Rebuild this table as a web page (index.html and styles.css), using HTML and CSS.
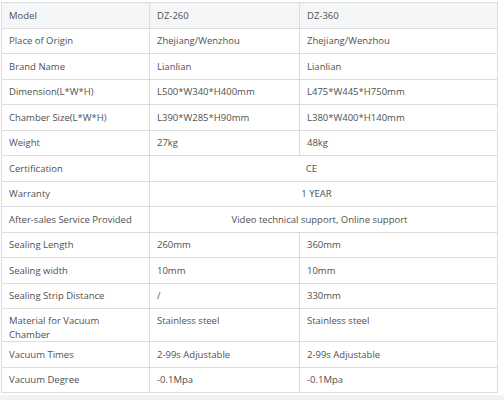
FILE: index.html
```html
<!DOCTYPE html>
<html>
<head>
<meta charset="utf-8">
<link rel="stylesheet" href="styles.css">
</head>
<body>
<div class="wrap">
<table class="spec">
<colgroup><col class="c1"><col class="c2"><col class="c3"></colgroup>
<tr class="head"><td>Model</td><td>DZ-260</td><td>DZ-360</td></tr>
<tr><td>Place of Origin</td><td>Zhejiang/Wenzhou</td><td>Zhejiang/Wenzhou</td></tr>
<tr><td>Brand Name</td><td>Lianlian</td><td>Lianlian</td></tr>
<tr><td>Dimension(L*W*H)</td><td>L500*W340*H400mm</td><td>L475*W445*H750mm</td></tr>
<tr><td>Chamber Size(L*W*H)</td><td>L390*W285*H90mm</td><td>L380*W400*H140mm</td></tr>
<tr><td>Weight</td><td>27kg</td><td>48kg</td></tr>
<tr><td>Certification</td><td colspan="2" class="mid m1">CE</td></tr>
<tr><td>Warranty</td><td colspan="2" class="mid m2">1 YEAR</td></tr>
<tr><td>After-sales Service Provided</td><td colspan="2" class="mid m3">Video technical support, Online support</td></tr>
<tr><td>Sealing Length</td><td>260mm</td><td>360mm</td></tr>
<tr><td>Sealing width</td><td>10mm</td><td>10mm</td></tr>
<tr><td>Sealing Strip Distance</td><td>/</td><td>330mm</td></tr>
<tr class="tall"><td>Material for Vacuum Chamber</td><td>Stainless steel</td><td>Stainless steel</td></tr>
<tr><td>Vacuum Times</td><td>2-99s Adjustable</td><td>2-99s Adjustable</td></tr>
<tr><td>Vacuum Degree</td><td>-0.1Mpa</td><td>-0.1Mpa</td></tr>
</table>
</div>
</body>
</html>
```
FILE: styles.css
```css
html, body {
  margin: 0;
  background: #f2f2f2;
}
.wrap {
  background: #ffffff;
  padding: 2px 0 2px 1px;
}
.spec {
  border-collapse: collapse;
  width: 496px;
  table-layout: fixed;
  font-family: "Open Sans", "Noto Sans", sans-serif;
  font-size: 9.5px;
  color: #505050;
}
.c1 { width: 148px; }
.c2 { width: 150px; }
.c3 { width: 198px; }
.spec td {
  border: 1px solid #dcdcdc;
  height: 18.5px;
  padding: 3px 7px;
  line-height: 13px;
  vertical-align: middle;
  text-align: left;
}
.head td {
  background: #f5f6f8;
}
.spec .tall td {
  vertical-align: top;
  padding: 5px 7px 0;
  line-height: 13.5px;
}
.spec td.mid { text-align: center; }
.spec td.m1 { padding-right: 31px; }
.spec td.m2 { padding-right: 21px; }
.spec td.m3 { padding-right: 15px; }
```
